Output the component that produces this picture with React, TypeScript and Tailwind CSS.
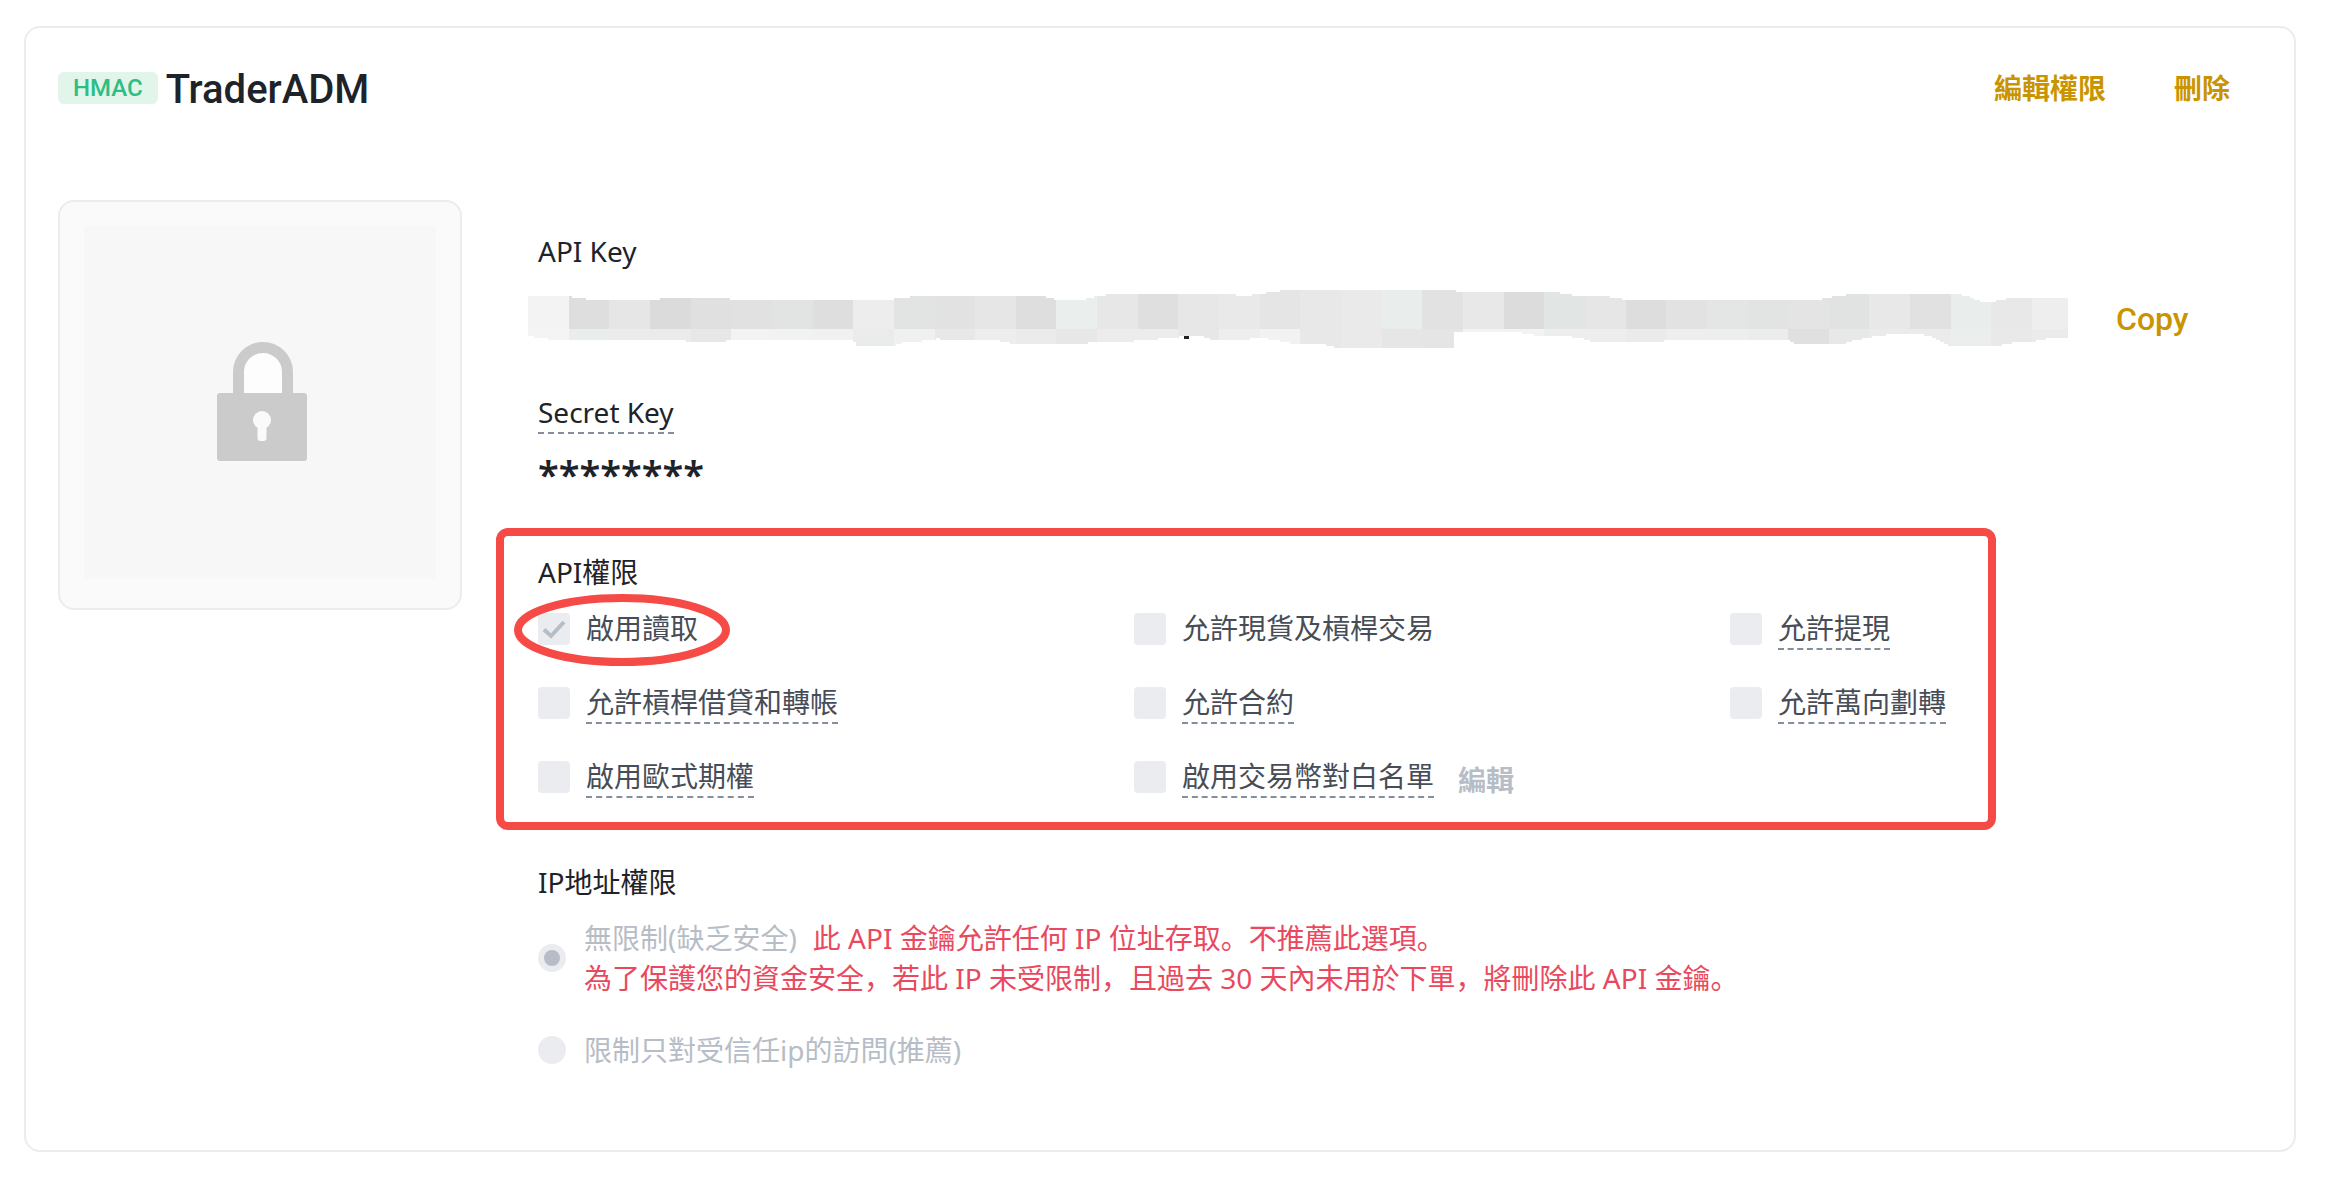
import { useId } from 'react'
import type { ReactNode } from 'react'

type Permission = {
  label: string
  checked?: boolean
  hint?: boolean
  circled?: boolean
  editable?: boolean
}

const permissions: Permission[] = [
  { label: '啟用讀取', checked: true, circled: true },
  { label: '允許現貨及槓桿交易' },
  { label: '允許提現', hint: true },
  { label: '允許槓桿借貸和轉帳', hint: true },
  { label: '允許合約', hint: true },
  { label: '允許萬向劃轉', hint: true },
  { label: '啟用歐式期權', hint: true },
  { label: '啟用交易幣對白名單', hint: true, editable: true },
]

// Mosaic that hides the key: one colour per block, upper and lower row
const upperBlocks = [
  '#f3f3f3', '#dedede', '#e6e6e6', '#dbdbdb', '#e0e0e0', '#e1e1e1', '#e1e4e3', '#dedede', '#ededed', '#e1e4e3',
  '#e2e2e2', '#e6e6e6', '#dedede', '#eaeeed', '#e7e7e7', '#dfdfdf', '#e7e7e7', '#e9e9e9', '#e5e5e5', '#e8e8e8',
  '#eaeaea', '#e9eeec', '#e2e2e2', '#e8e8e8', '#dcdcdc', '#e1e5e4', '#e6e6e6', '#dddddd', '#e2e2e2', '#e3e6e5',
  '#e1e4e3', '#e4e4e4', '#e0e3e2', '#e8e8e8', '#e1e1e1', '#e9eeec', '#e8e8e8', '#eeeeee',
]
const lowerBlocks = [
  '#f4f4f4', '#e9eeec', '#ebebeb', '#ebebeb', '#e7e7e7', '#f3f3f3', '#f2f2f2', '#f1f1f1', '#e9eceb', '#f0f0f0',
  '#e8e8e8', '#ededed', '#ebebeb', '#e7e7e7', '#ececec', '#ececec', '#e7e7e7', '#eeeeee', '#f2f2f2', '#e8e8e8',
  '#eaeaea', '#e6e6e6', '#e5e5e5', '#f3f3f3', '#f3f3f3', '#eeeeee', '#ededed', '#ebebeb', '#eeeeee', '#eeeeee',
  '#ececec', '#e0e0e0', '#e8e8e8', '#ebebeb', '#ebebeb', '#ebeeed', '#e9e9e9', '#ebebeb',
]

const mosaicOutline =
  'M0 6H44V8H58V10H132V8H202V10H366V8H382V6H518V8H526V10H558V8H566V6H578V4H708V6H724V4H738V2H752V0H928V2H1032V4H1044V6H1082V8H1094V10H1294V8H1304V6H1318V4H1434V6H1442V8H1446V10H1452V12H1468V10H1478V8H1540' +
  'V48H1518V50H1508V52H1484V54H1474V56H1420V54H1416V52H1412V50H1408V48H1404V46H1396V44H1358V46H1344V48H1334V50H1324V52H1318V54H1266V52H1262V50H1136V52H1062V50H1056V48H1044V46H1006V44H994V42H926V58H806V56H798V54H762V52H752V50H740V48H722V50H682V48H676V46H651V48H630V50H606V52H560V54H482V52H472V50H412V48H408V50H394V52H374V54H368V56H328V52H325V50H198V52H158V50H20V48H6V46H0Z'

function MaskedKey() {
  const step = 40.65
  return (
    <svg width="1540" height="58" viewBox="0 0 1540 58" className="block shrink" role="img" aria-label="API Key">
      <clipPath id="mosaic">
        <path d={mosaicOutline} />
      </clipPath>
      <g clipPath="url(#mosaic)" shapeRendering="crispEdges">
        {upperBlocks.map((fill, i) => (
          <rect key={i} x={i * step} y="0" width={step + 1} height="40" fill={fill} />
        ))}
        {lowerBlocks.map((fill, i) => (
          <rect key={i} x={i * step} y="39" width={step + 1} height="19" fill={fill} />
        ))}
      </g>
      <rect x="656" y="46" width="5" height="3" fill="#1e2329" />
    </svg>
  )
}

function Lock() {
  return (
    <svg width="94" height="120" viewBox="-4 0 94 120" aria-hidden="true">
      <path d="M21.5 53V30a24.5 24.5 0 0 1 49 0v23" fill="#fdfdfd" stroke="#cbcbcb" strokeWidth="11" />
      <rect x="0" y="51" width="90" height="68" rx="3" fill="#cbcbcb" />
      <circle cx="45" cy="78" r="9" fill="#fafafa" />
      <path d="M40.5 82h9v14a3 3 0 0 1-3 3h-3a3 3 0 0 1-3-3z" fill="#fafafa" />
    </svg>
  )
}

function PermissionItem({ label, checked, hint, circled, editable }: Permission) {
  const id = useId()
  return (
    <div className="relative flex items-center">
      <span className="relative mr-4 flex size-8 shrink-0">
        <input
          id={id}
          type="checkbox"
          defaultChecked={checked}
          disabled
          className="size-8 appearance-none rounded bg-[#eaecef]"
        />
        {checked && (
          <svg viewBox="0 0 32 32" className="pointer-events-none absolute inset-0" aria-hidden="true">
            <path d="M6 16.5l7 6.5L26 9" fill="none" stroke="#b7bdc6" strokeWidth="4" />
          </svg>
        )}
      </span>
      <label
        htmlFor={id}
        className={`border-b-2 border-dashed whitespace-nowrap text-[#474d57] ${hint ? 'border-[#848e9c]' : 'border-transparent'}`}
      >
        {label}
      </label>
      {editable && (
        <button disabled className="ml-6 self-end leading-9 font-semibold text-[#b7bdc6]">
          編輯
        </button>
      )}
      {circled && (
        <svg
          width="216"
          height="72"
          viewBox="0 0 216 72"
          className="pointer-events-none absolute -top-3.5 -left-6"
          aria-hidden="true"
        >
          <ellipse cx="108" cy="36" rx="104" ry="32" fill="none" stroke="#f54a45" strokeWidth="8" />
        </svg>
      )}
    </div>
  )
}

function RadioItem({ checked, children }: { checked?: boolean; children: ReactNode }) {
  const id = useId()
  return (
    <div className="flex items-center">
      <span className="relative mr-[18px] flex size-7 shrink-0 items-center justify-center">
        <input
          id={id}
          type="radio"
          name="ip"
          defaultChecked={checked}
          disabled
          className="size-7 appearance-none rounded-full bg-[#eaecef]"
        />
        {checked && <span className="absolute size-4 rounded-full bg-[#b7bdc6]" />}
      </span>
      <label htmlFor={id} className="text-[#b7bdc6]">
        {children}
      </label>
    </div>
  )
}

export default function App() {
  return (
    <main className="bg-white pt-[26px] pr-[30px] pb-[26px] pl-6 font-['Noto_Sans','Noto_Sans_CJK_SC',sans-serif] text-[28px] leading-10 text-[#1e2329]">
      <article className="rounded-2xl border-2 border-[#eaecef] px-8 pt-[34px] pb-20">
        <header className="flex items-center justify-between pr-8">
          <div className="flex items-center gap-2 font-['Roboto',sans-serif] font-medium">
            <span className="rounded-md bg-[#e2f5ea] px-[15px] text-2xl leading-8 text-[#2ebd85]">HMAC</span>
            <h1 className="pt-1 text-[40px] leading-12">TraderADM</h1>
          </div>
          <div className="flex gap-[68px] font-semibold text-[#c99400]">
            <button>編輯權限</button>
            <button>刪除</button>
          </div>
        </header>

        <div className="mt-[86px] flex items-start gap-[76px]">
          <div className="shrink-0 rounded-2xl border-2 border-[#eaecef] bg-[#fafafa] px-6 pt-6 pb-[30px]">
            <div className="flex size-[352px] items-center justify-center bg-[#f7f7f7]">
              <Lock />
            </div>
          </div>

          <div className="min-w-0 flex-1 pt-[31px]">
            <h2>API Key</h2>
            <div className="mt-[19px] -ml-2.5 flex items-center gap-12">
              <MaskedKey />
              <button className="font-['Roboto',sans-serif] text-[32px] font-medium text-[#c99400]">Copy</button>
            </div>

            <h2 className="mt-11 w-fit border-b-2 border-dashed border-[#848e9c]">Secret Key</h2>
            <p className="mt-5 text-[38px] leading-10 font-semibold">********</p>

            <section className="mt-[34px] mr-[266px] -ml-[42px] rounded-xl border-8 border-[#f54a45] px-[34px] pt-4 pb-6">
              <h2>API權限</h2>
              <div className="mt-4 grid grid-cols-[1fr_1fr_224px] gap-y-8">
                {permissions.map((item) => (
                  <PermissionItem key={item.label} {...item} />
                ))}
              </div>
            </section>

            <section className="mt-8">
              <h2>IP地址權限</h2>
              <div className="mt-4 flex flex-col gap-8">
                <RadioItem checked>
                  無限制(缺乏安全)
                  <span className="ml-4 text-[#e9495e]">此 API 金鑰允許任何 IP 位址存取。不推薦此選項。</span>
                  <br />
                  <span className="text-[#e9495e]">
                    為了保護您的資金安全，若此 IP 未受限制，且過去 30 天內未用於下單，將刪除此 API 金鑰。
                  </span>
                </RadioItem>
                <RadioItem>限制只對受信任ip的訪問(推薦)</RadioItem>
              </div>
            </section>
          </div>
        </div>
      </article>
    </main>
  )
}
